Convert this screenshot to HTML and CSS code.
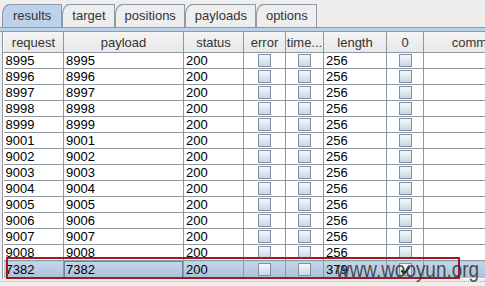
FILE: index.html
```html
<!DOCTYPE html>
<html lang="en">

<head>
    <meta charset="UTF-8">
    <title>intruder results</title>
    <link rel="stylesheet" href="styles.css">
</head>

<body>
    <div class="window">
        <div class="tabs">
            <div class="tab tab-active">results</div>
            <div class="tab">target</div>
            <div class="tab">positions</div>
            <div class="tab">payloads</div>
            <div class="tab">options</div>
        </div>
        <div class="band"></div>

        <div class="panel">
            <table class="grid">
                <colgroup>
                    <col class="c-req">
                    <col class="c-pay">
                    <col class="c-status">
                    <col class="c-err">
                    <col class="c-time">
                    <col class="c-len">
                    <col class="c-zero">
                    <col class="c-comm">
                </colgroup>
                <thead>
                    <tr>
                        <th>request</th>
                        <th>payload</th>
                        <th>status</th>
                        <th>error</th>
                        <th>time...</th>
                        <th>length</th>
                        <th>0</th>
                        <th class="comm">comment</th>
                    </tr>
                </thead>
                <tbody id="rows"></tbody>
            </table>
            <div class="mark"></div>
        </div>
        <div class="status-line"></div>
        <div class="watermark">www.wooyun.org</div>
    </div>

    <script>
        // linhas da tabela
        var reqs = ['8995', '8996', '8997', '8998', '8999', '9001', '9002', '9003', '9004', '9005', '9006', '9007', '9008'];
        var tbody = document.getElementById('rows');

        function linha(req, len, sel) {
            var tr = document.createElement('tr');
            if (sel) tr.className = 'selected';
            tr.innerHTML =
                '<td>' + req + '</td>' +
                '<td class="' + (sel ? 'focus' : '') + '">' + req + '</td>' +
                '<td>200</td>' +
                '<td class="box"><span class="chk"></span></td>' +
                '<td class="box"><span class="chk"></span></td>' +
                '<td>' + len + '</td>' +
                '<td class="box"><span class="chk' + (sel ? ' checked' : '') + '"></span></td>' +
                '<td></td>';
            tbody.appendChild(tr);
        }

        reqs.forEach(function (r) { linha(r, '256', false); });
        linha('7382', '379', true);
    </script>
</body>

</html>
```

FILE: styles.css
```css
body {
    margin: 0;
    background-color: #eeeeee;
    font-family: "Liberation Sans", Arial, sans-serif;
    font-size: 13px;
    color: #000;
}

.window {
    position: relative;
    width: 485px;
    height: 286px;
    overflow: hidden;
}

.tabs {
    display: flex;
    padding: 4px 0 0 3px;
    height: 23px;
}

.tab {
    height: 22px;
    line-height: 22px;
    padding: 0 8px 0 9px;
    border: 1px solid #8e99a6;
    border-bottom: none;
    border-left: none;
    border-top-left-radius: 7px 10px;
    box-shadow: -1px 0 0 #8e99a6;
    margin-left: 1px;
    color: #333;
    font-size: 13px;
    background-color: #eeeeee;
}

.tab-active {
    background-color: #bcd2e8;
    margin-left: 0;
    padding: 0 10px 0 10px;
}

.band {
    height: 3px;
    background-color: #bcd2e8;
    border-top: 1px solid #8e99a6;
    border-bottom: 1px solid #8e99a6;
}

.panel {
    position: relative;
    margin-left: 2px;
    border-left: 1px solid #8e99a6;
    background-color: #fff;
    height: 247px;
    overflow: hidden;
}

.grid {
    border-collapse: collapse;
    table-layout: fixed;
    width: 560px;
}

.c-req { width: 60px; }
.c-pay { width: 120px; }
.c-status { width: 60px; }
.c-err { width: 42px; }
.c-time { width: 38px; }
.c-len { width: 63px; }
.c-zero { width: 37px; }
.c-comm { width: 140px; }

.grid th {
    height: 20px;
    padding: 0;
    font-weight: normal;
    color: #333;
    background-color: #eeeeee;
    background-image: linear-gradient(#f4f4f4, #e8e8e8);
    border-right: 1px solid #8e99a6;
    border-bottom: 1px solid #8e99a6;
    border-left: 1px solid #fff;
    white-space: nowrap;
    overflow: hidden;
}

.grid th.comm {
    text-indent: -30px;
}

.grid td {
    height: 15px;
    line-height: 15px;
    padding: 0 0 0 2px;
    border-right: 1px solid #8e99a6;
    border-bottom: 1px solid #8e99a6;
    white-space: nowrap;
    overflow: hidden;
}

.grid td.box {
    text-align: center;
    padding: 0;
}

.chk {
    display: inline-block;
    width: 11px;
    height: 11px;
    border: 1px solid #8190a4;
    background-image: linear-gradient(#f4f8fc, #c9d6e6);
    vertical-align: -2px;
    position: relative;
}

.chk.checked::after {
    content: "";
    position: absolute;
    left: 3px;
    top: 1px;
    width: 3px;
    height: 7px;
    border-right: 2px solid #222;
    border-bottom: 2px solid #222;
    transform: rotate(40deg);
}

.grid tr.selected td {
    background-color: #b8cde3;
    background-image: linear-gradient(#c4d6ea, #a9c0da);
    border-bottom: none;
    height: 17px;
}

.grid td.focus {
    box-shadow: inset 0 0 0 1px #6a84a8;
}

.mark {
    position: absolute;
    left: 3px;
    top: 225px;
    width: 450px;
    height: 18px;
    border: 2px solid #a5181d;
}

.status-line {
    height: 5px;
    border-top: 1px dotted #b0b0b0;
    margin-top: 2px;
}

.watermark {
    position: absolute;
    left: 336px;
    top: 257px;
    font-family: "Liberation Sans", Arial, sans-serif;
    font-size: 22px;
    color: rgba(50, 50, 50, 0.85);
    transform: scaleX(0.86);
    transform-origin: left top;
    white-space: nowrap;
}
```
